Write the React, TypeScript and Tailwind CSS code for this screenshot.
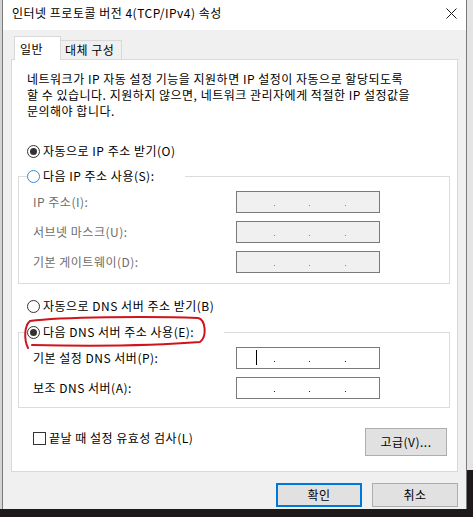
import React from 'react';

const font = { fontFamily: '"Malgun Gothic", "Noto Sans CJK KR", "Noto Sans", sans-serif' };

function Radio({ checked = false, blue = false }: { checked?: boolean; blue?: boolean }) {
  return (
    <span
      className={`w-[13px] h-[13px] rounded-full border flex items-center justify-center bg-white shrink-0 ${
        blue ? 'border-[#3b8ad8]' : 'border-[#333333]'
      }`}
    >
      {checked && <span className="w-[7px] h-[7px] rounded-full bg-[#333333]" />}
    </span>
  );
}

function IpBox({ disabled = false, caret = false }: { disabled?: boolean; caret?: boolean }) {
  const dot = disabled ? 'bg-[#8a8a8a]' : 'bg-[#222222]';
  return (
    <div
      className={`relative w-[144px] h-[22px] border border-[#7a7a7a] flex items-start pt-[13px] ${
        disabled ? 'bg-[#f0f0f0]' : 'bg-white'
      }`}
    >
      {caret && <span className="absolute left-[19px] top-[2px] w-[1px] h-[15px] bg-black" />}
      <span className={`ml-[37px] w-[1px] h-[1px] ${dot}`} />
      <span className={`ml-[34px] w-[1px] h-[1px] ${dot}`} />
      <span className={`ml-[35px] w-[1px] h-[1px] ${dot}`} />
    </div>
  );
}

function Field({ label, disabled = false, caret = false }: { label: string; disabled?: boolean; caret?: boolean }) {
  return (
    <div className="flex items-center h-[22px]">
      <span className={`w-[203px] whitespace-nowrap ${disabled ? 'text-[#6d6d6d]' : 'text-black'}`}>{label}</span>
      <IpBox disabled={disabled} caret={caret} />
    </div>
  );
}

export default function App() {
  return (
    <div
      className="relative w-[473px] h-[517px] bg-[#1f1a1a] overflow-hidden text-[12px] leading-[16px] tracking-[0.5px] text-black"
      style={font}
    >
      <div className="flex h-[509px]">
        {/* desktop strip left */}
        <div className="w-[2px] bg-[#d4d4d4]" />

        {/* dialog */}
        <div className="w-[465px] flex flex-col border-x border-[#7a7a7a] bg-[#f0f0f0]">
          {/* title bar */}
          <div className="h-[30px] bg-white flex items-start justify-between pl-[9px] pr-[9px] pt-[5px]">
            <span className="leading-[15px] whitespace-nowrap">인터넷 프로토콜 버전 4(TCP/IPv4) 속성</span>
            <svg width="11" height="11" viewBox="0 0 11 11" className="mt-[3px]">
              <path d="M0.5 0.5L10.5 10.5M10.5 0.5L0.5 10.5" stroke="#1a1a1a" strokeWidth="1" />
            </svg>
          </div>

          <div className="pt-[6px] px-[8px]">
            {/* tabs */}
            <div className="flex items-end h-[23px] pl-[3px]">
              <div className="relative z-10 w-[47px] h-[24px] -mb-[1px] bg-white border border-b-0 border-[#d9d9d9] pl-[5px] pt-[4px] whitespace-nowrap">
                일반
              </div>
              <div className="w-[61px] h-[19px] border border-l-0 border-b-0 border-[#d9d9d9] bg-[#f0f0f0] pl-[4px] pt-[1px] whitespace-nowrap">
                대체 구성
              </div>
            </div>

            {/* panel */}
            <div className="w-[447px] h-[413px] bg-white border border-[#d9d9d9] pl-[6px] pr-[7px] pt-[11px]">
              <p className="ml-[9px] leading-[16px] whitespace-nowrap">
                네트워크가 IP 자동 설정 기능을 지원하면 IP 설정이 자동으로 할당되도록
                <br />할 수 있습니다. 지원하지 않으면, 네트워크 관리자에게 적절한 IP 설정값을
                <br />문의해야 합니다.
              </p>

              <div className="mt-[24px] ml-[9px] flex items-center gap-[3px] h-[16px]">
                <Radio checked />
                <span className="whitespace-nowrap">자동으로 IP 주소 받기(O)</span>
              </div>

              <fieldset className="mt-[9px] w-[432px] border border-[#dcdcdc]">
                <legend className="ml-[8px] pr-[30px] flex items-center gap-[3px] h-[16px]">
                  <Radio blue />
                  <span className="whitespace-nowrap">다음 IP 주소 사용(S):</span>
                </legend>
                <div className="pl-[14px] pt-[7px] pb-[10px] flex flex-col gap-[8px]">
                  <Field label="IP 주소(I):" disabled />
                  <Field label="서브넷 마스크(U):" disabled />
                  <Field label="기본 게이트웨이(D):" disabled />
                </div>
              </fieldset>

              <div className="mt-[14px] ml-[9px] flex items-center gap-[3px] h-[16px]">
                <Radio />
                <span className="whitespace-nowrap">자동으로 DNS 서버 주소 받기(B)</span>
              </div>

              <fieldset className="mt-[10px] w-[432px] border border-[#dcdcdc]">
                <legend className="ml-[8px] pr-[30px] flex items-center gap-[3px] h-[16px]">
                  <Radio checked />
                  <span className="whitespace-nowrap">다음 DNS 서버 주소 사용(E):</span>
                </legend>
                <div className="pl-[14px] pt-[7px] pb-[8px] flex flex-col gap-[8px]">
                  <Field label="기본 설정 DNS 서버(P):" caret />
                  <Field label="보조 DNS 서버(A):" />
                </div>
              </fieldset>

              <div className="mt-[20px] w-[432px] flex items-start justify-between">
                <div className="ml-[15px] mt-[2px] flex items-center gap-[3px] h-[16px]">
                  <span className="w-[13px] h-[13px] border border-[#333333] bg-white" />
                  <span className="whitespace-nowrap">끝날 때 설정 유효성 검사(L)</span>
                </div>
                <button className="mr-[3px] w-[82px] h-[28px] bg-[#e1e1e1] border border-[#adadad] text-[12px] tracking-[0.5px]">
                  고급(V)...
                </button>
              </div>
            </div>

            {/* bottom buttons */}
            <div className="mt-[11px] flex justify-end">
              <button className="w-[86px] h-[24px] bg-[#e1e1e1] border-2 border-[#0078d7] text-[12px] tracking-[0.5px]">확인</button>
              <button className="ml-[10px] w-[86px] h-[24px] bg-[#e1e1e1] border border-[#adadad] text-[12px] tracking-[0.5px]">
                취소
              </button>
            </div>
          </div>
        </div>

        {/* desktop strip right */}
        <div className="flex-1 flex flex-col">
          <div className="h-[470px] bg-[#e4e4e4]" />
          <div className="flex-1 bg-[#1f1a1a]" />
        </div>
      </div>

      {/* red annotation */}
      <svg className="absolute left-[20px] top-[312px]" width="192" height="40" viewBox="0 0 192 40">
        <path
          d="M8 36 C4 28, 4 14, 10 9 C40 5, 130 4, 178 6 C186 8, 187 25, 180 30 C130 34, 60 34, 12 33"
          fill="none"
          stroke="#d0141c"
          strokeWidth="2"
          strokeLinecap="round"
        />
      </svg>
    </div>
  );
}
